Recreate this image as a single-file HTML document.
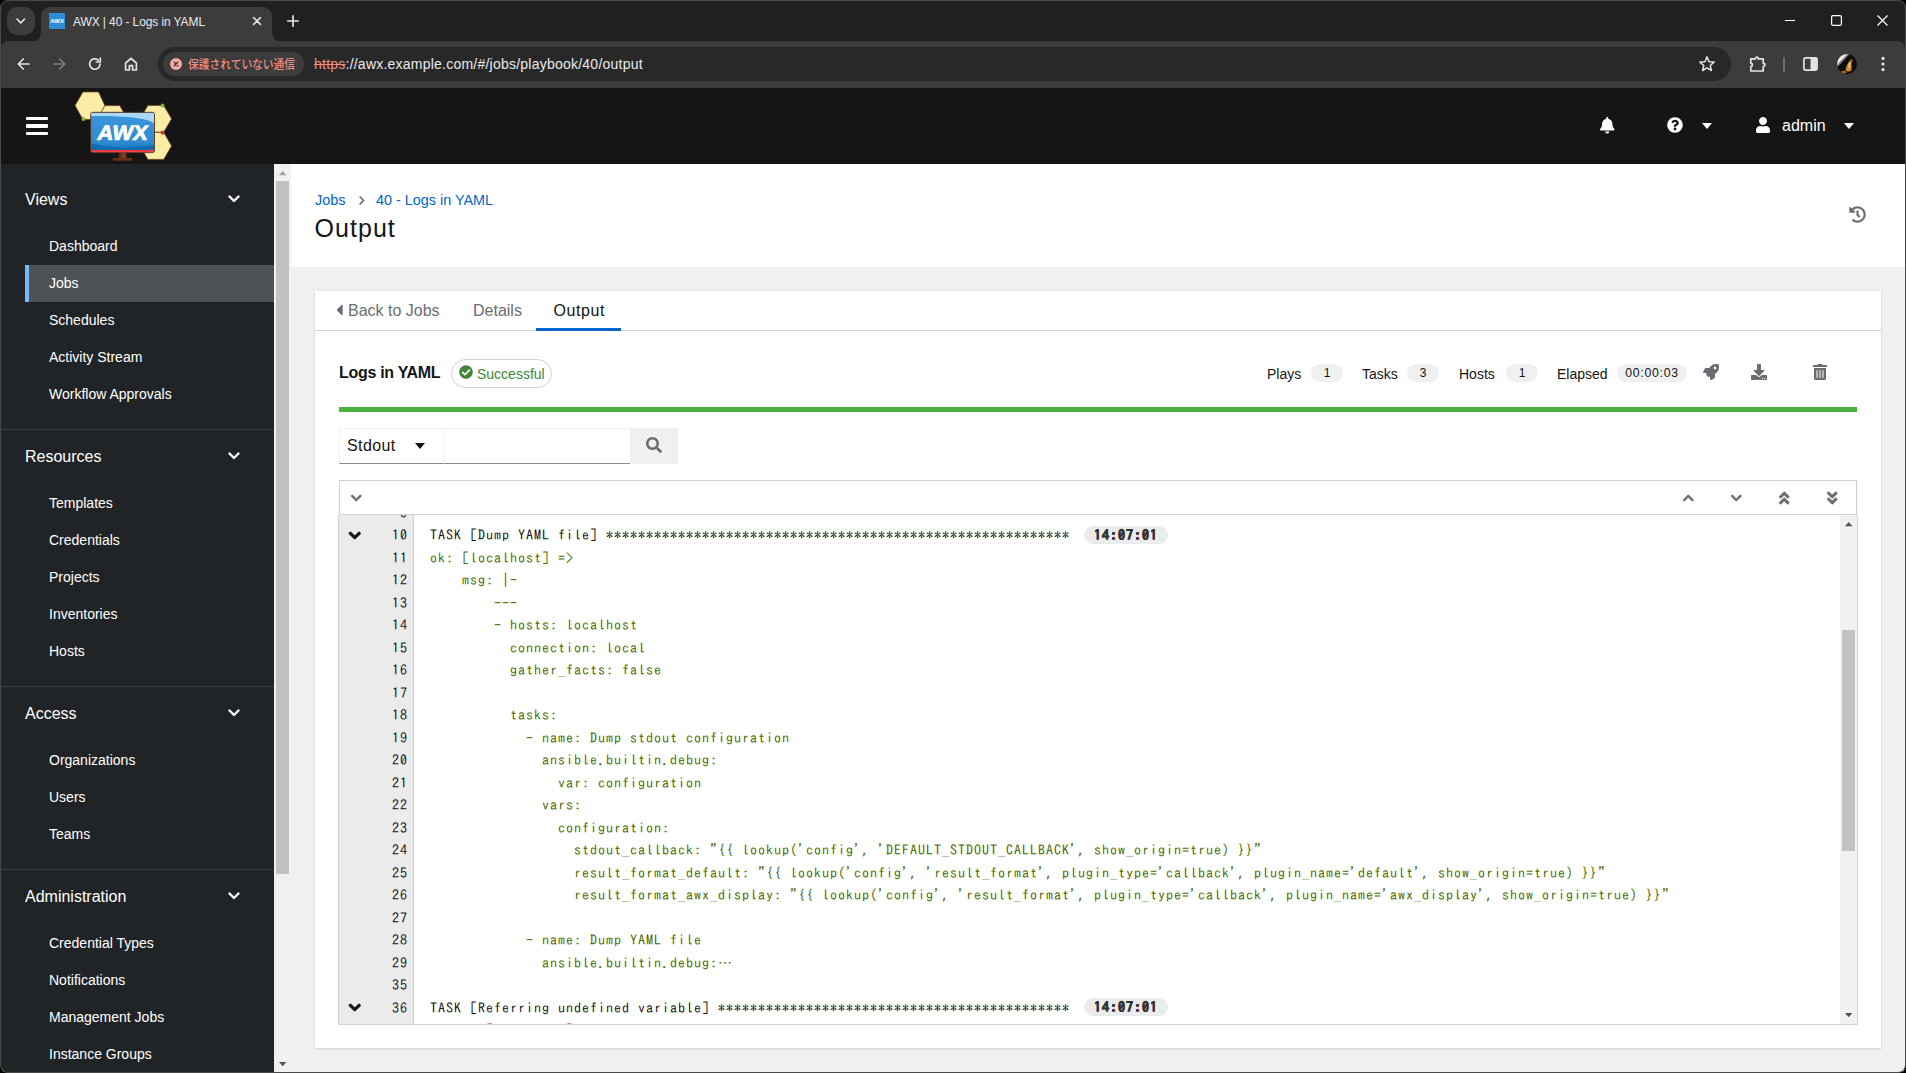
<!DOCTYPE html>
<html lang="ja">
<head>
<meta charset="utf-8">
<title>AWX | 40 - Logs in YAML</title>
<style>
*{box-sizing:border-box;margin:0;padding:0}
html,body{width:1906px;height:1073px;overflow:hidden;background:#000}
body{font-family:"Liberation Sans","Noto Sans CJK JP",sans-serif;color:#151515;position:relative}
.abs{position:absolute}
svg{display:block;position:absolute;overflow:visible}
/* ---------- window ---------- */
#win{position:absolute;left:0;top:0;width:1906px;height:1073px;background:#1f2020;border-radius:8px;overflow:hidden}
#winborder{position:absolute;left:0;top:0;width:1906px;height:1073px;border:1px solid #4a4947;border-radius:8px;z-index:50;pointer-events:none}
/* ---------- tab strip ---------- */
#tabsearch{left:7px;top:7px;width:27.7px;height:27.7px;border-radius:10px;background:#3c3c3c}
#tab{left:41px;top:7px;width:231px;height:35px;background:#3c3c3c;border-radius:9px 9px 0 0}
#tab:before,#tab:after{content:"";position:absolute;bottom:0;width:9px;height:9px}
#tab:before{left:-9px;background:radial-gradient(circle at 0 0,rgba(60,60,60,0) 8.5px,#3c3c3c 9px)}
#tab:after{right:-9px;background:radial-gradient(circle at 100% 0,rgba(60,60,60,0) 8.5px,#3c3c3c 9px)}
#favicon{left:49px;top:13px;width:16px;height:16px;background:#2e8dd6}
#tabtitle{left:73px;top:13px;height:18px;line-height:18px;font-size:12px;color:#e8eaed;white-space:nowrap;letter-spacing:-0.1px}
/* ---------- toolbar ---------- */
#toolbar{left:1px;top:41px;width:1904px;height:47px;background:#3c3c3c;border-radius:8px 8px 0 0}
#omni{left:158px;top:47px;width:1573px;height:34px;border-radius:17px;background:#282828}
#chip{left:163px;top:52px;width:141px;height:24px;border-radius:12px;background:#3c3c3c}
#chiptxt{left:188px;top:53.5px;height:24px;line-height:23px;font-size:12px;font-weight:500;color:#f28b82;white-space:nowrap;font-family:"Liberation Sans","Noto Sans CJK JP",sans-serif;transform:scaleX(0.895);transform-origin:0 50%}
#url{left:314px;top:52px;height:24px;line-height:24px;font-size:14px;color:#e8eaed;white-space:nowrap;letter-spacing:0.23px}
#url s{color:#f28b82;text-decoration-thickness:1px}
/* ---------- AWX header ---------- */
#page{left:1px;top:88px;width:1904px;height:984px;background:#f0f0f0;overflow:hidden}
#hdr{left:0;top:0;width:1904px;height:76px;background:#151515}
#admin{left:1781px;top:26px;height:24px;line-height:24px;font-size:16px;color:#fff;white-space:nowrap}
/* ---------- sidebar ---------- */
#side{left:0;top:76px;width:273px;height:908px;background:#212427;color:#fff}
.sec{position:absolute;left:24px;height:24px;line-height:24px;font-size:16px;white-space:nowrap}
.it{position:absolute;left:48px;height:37px;line-height:37px;font-size:14px;white-space:nowrap}
.sep{position:absolute;left:0;width:273px;height:1px;background:#3c3f42}
.chev{left:227px;width:12px;height:8px}
#cur{left:24px;top:101px;width:249px;height:37px;background:#4f5255;border-left:4px solid #73bcf7}
#sbar{left:273px;top:76px;width:17px;height:908px;background:#f1f1f1}
#sthumb{left:275px;top:93px;width:13px;height:693px;background:#c1c1c1}

/* ---------- main ---------- */
#phead{left:290px;top:76px;width:1614px;height:103px;background:#fff}
.bc{position:absolute;top:101px;height:22px;line-height:22px;font-size:14.4px;color:#0066cc;white-space:nowrap}
#title{left:313.5px;top:123.5px;height:32px;line-height:32px;font-size:25px;color:#151515;white-space:nowrap;letter-spacing:1.05px}
#card{left:314px;top:203px;width:1566px;height:757px;background:#fff;box-shadow:0 1px 2px rgba(3,3,3,.12),0 0 2px rgba(3,3,3,.06)}
#tabline{left:314px;top:242px;width:1566px;height:1px;background:#d2d2d2}
.tab{position:absolute;top:211px;height:24px;line-height:24px;font-size:16px;color:#6a6e73;white-space:nowrap}
#tabul{left:535px;top:240px;width:85px;height:3px;background:#0066cc}
#jname{left:338px;top:273px;height:24px;line-height:24px;font-size:16px;font-weight:bold;color:#151515;white-space:nowrap;letter-spacing:-0.3px}
#pill{left:450px;top:271px;width:101px;height:29px;border:1px solid #d2d2d2;border-radius:15px;background:#fff}
#pilltxt{left:476px;top:274.6px;height:22px;line-height:22px;font-size:14px;color:#3e8635;white-space:nowrap}
.st{position:absolute;margin-left:-1px;top:275px;height:22px;line-height:22px;font-size:14px;color:#151515;white-space:nowrap}
.bd{position:absolute;top:275.5px;height:18px;line-height:18px;border-radius:9px;background:#f0f0f0;font-size:12px;color:#151515;text-align:center;white-space:nowrap}
#gbar{left:338px;top:319px;width:1518px;height:5px;background:#4cb140}
#sel{left:338px;top:340px;width:105px;height:36px;background:#fff;border:1px solid #f0f0f0;border-bottom:1px solid #8a8d90}
#seltxt{left:346px;top:346px;height:24px;line-height:24px;font-size:16px;color:#151515;white-space:nowrap;letter-spacing:0.4px}
#inp{left:442px;top:340px;width:188px;height:36px;background:#fff;border:1px solid #f0f0f0;border-bottom:1px solid #8a8d90}
#sbtn{left:629px;top:340px;width:48px;height:36px;background:#f0f0f0}
#otb{left:338px;top:392px;width:1518px;height:35px;background:#fff;border:1px solid #d2d2d2}
#out{left:337px;top:427px;width:1520px;height:510px;background:#fff;border:1px solid #d2d2d2;border-top:none;overflow:hidden}
#gut{left:0;top:0;width:74.5px;height:511px;background:#ebebeb;border-right:1px solid #d2d2d2}
#oscr{left:1501px;top:0;width:17px;height:511px;background:#f1f1f1}
#othumb{left:1503px;top:115px;width:13px;height:221px;background:#c1c1c1}
.ln,.cd{position:absolute;height:22.5px;line-height:22.5px;font-family:"IPAGothic","Liberation Mono",monospace;font-size:14px;letter-spacing:1px;white-space:pre;margin-top:1px}
.ln{left:0;width:69px;text-align:right;color:#151515}
.cd{left:91px;color:#151515}
.g{color:#486b00}
.r{color:#c9190b}
.ts{position:absolute;left:745px;width:84px;height:18px;border-radius:9px;background:#ebebeb;font-family:"IPAGothic","Liberation Mono",monospace;font-size:14px;letter-spacing:1px;font-weight:bold;line-height:18px;text-align:center;color:#333;-webkit-text-stroke:0.5px #333}
</style>
</head>
<body>
<div id="win">

<!-- ======== tab strip ======== -->
<div id="tabsearch" class="abs"></div>
<svg style="left:16.2px;top:17.8px" width="9.5" height="6.3" viewBox="0 0 9.5 6.3"><path d="M1 1 L4.75 4.9 L8.5 1" fill="none" stroke="#f0f0f0" stroke-width="1.5" stroke-linecap="round" stroke-linejoin="round"/></svg>
<div id="tab" class="abs"></div>
<div id="favicon" class="abs"><svg style="left:0;top:0" width="16" height="16" viewBox="0 0 16 16"><text x="8.1" y="10" text-anchor="middle" font-family="Liberation Sans, sans-serif" font-weight="bold" font-size="5.6" fill="#fff" textLength="13.6" lengthAdjust="spacingAndGlyphs">AWX</text></svg></div>
<div id="tabtitle" class="abs">AWX | 40 - Logs in YAML</div>
<svg style="left:252px;top:16px" width="10" height="10" viewBox="0 0 10 10"><path d="M1.6 1.6 L8.4 8.4 M8.4 1.6 L1.6 8.4" stroke="#e3e3e3" stroke-width="1.5" stroke-linecap="round"/></svg>
<svg style="left:287px;top:15px" width="12" height="12" viewBox="0 0 12 12"><path d="M6 0.8 V11.2 M0.8 6 H11.2" stroke="#e3e3e3" stroke-width="1.7" stroke-linecap="round"/></svg>
<!-- window controls -->
<div class="abs" style="left:1785px;top:20px;width:10px;height:1px;background:#fff"></div>
<svg style="left:1831px;top:15px" width="11" height="11" viewBox="0 0 11 11"><rect x="0.6" y="0.6" width="9.8" height="9.8" rx="1.5" fill="none" stroke="#fff" stroke-width="1.2"/></svg>
<svg style="left:1877px;top:15px" width="11" height="11" viewBox="0 0 11 11"><path d="M0.5 0.5 L10.5 10.5 M10.5 0.5 L0.5 10.5" stroke="#fff" stroke-width="1.2"/></svg>

<!-- ======== toolbar ======== -->
<div id="toolbar" class="abs"></div>
<svg style="left:17px;top:58px" width="13" height="12" viewBox="0 0 13 12"><path d="M12 6 H1.5 M6.3 1 L1.3 6 L6.3 11" fill="none" stroke="#e3e3e3" stroke-width="1.7" stroke-linecap="round" stroke-linejoin="round"/></svg>
<svg style="left:53px;top:58px" width="13" height="12" viewBox="0 0 13 12"><path d="M1 6 H11.5 M6.7 1 L11.7 6 L6.7 11" fill="none" stroke="#7d7d7d" stroke-width="1.7" stroke-linecap="round" stroke-linejoin="round"/></svg>
<svg style="left:88px;top:57px" width="14" height="14" viewBox="0 0 14 14"><path d="M12 7 A5.2 5.2 0 1 1 10.2 3.1" fill="none" stroke="#e3e3e3" stroke-width="1.7" stroke-linecap="round"/><path d="M12.3 1 V5 H8.3" fill="none" stroke="#e3e3e3" stroke-width="1.7" stroke-linejoin="round" stroke-linecap="round"/></svg>
<svg style="left:124px;top:57px" width="14" height="14" viewBox="0 0 14 14"><path d="M1.6 6 L7 1.5 L12.4 6 V13 H8.6 V8.6 H5.4 V13 H1.6 Z" fill="none" stroke="#e3e3e3" stroke-width="1.7" stroke-linejoin="round"/></svg>
<div id="omni" class="abs"></div>
<div id="chip" class="abs"></div>
<svg style="left:170px;top:58px" width="12" height="12" viewBox="0 0 12 12"><circle cx="6" cy="6" r="6" fill="#f4aaa4"/><path d="M4.2 4.2 L7.8 7.8 M7.8 4.2 L4.2 7.8" stroke="#2a2020" stroke-width="1.2" stroke-linecap="round"/></svg>
<div id="chiptxt" class="abs">保護されていない通信</div>
<div id="url" class="abs"><s>https</s>://awx.example.com/#/jobs/playbook/40/output</div>
<svg style="left:1699px;top:56px" width="16" height="16" viewBox="0 0 16 16"><path d="M8 0.9 L10 5.7 L15.1 6.1 L11.2 9.5 L12.4 14.5 L8 11.8 L3.6 14.5 L4.8 9.5 L0.9 6.1 L6 5.7 Z" fill="none" stroke="#e3e3e3" stroke-width="1.5" stroke-linejoin="round"/></svg>
<svg style="left:1749px;top:55px" width="18" height="17" viewBox="0 0 18 17"><path d="M1.8 3.9 H6.2 A1.55 1.7 0 0 1 9.3 3.9 H14.2 V8.4 A1.7 1.55 0 0 1 14.2 11.5 V16 H1.8 V11.5 A1.6 1.55 0 0 0 1.8 8.4 Z" fill="none" stroke="#e3e3e3" stroke-width="1.7" stroke-linejoin="round"/></svg>
<div class="abs" style="left:1783px;top:56.5px;width:2px;height:15.5px;border-radius:1px;background:#6e6e6e"></div>
<svg style="left:1803px;top:57px" width="15" height="14" viewBox="0 0 15 14"><rect x="0.9" y="0.9" width="13.2" height="12.2" rx="1.6" fill="none" stroke="#e3e3e3" stroke-width="1.7"/><rect x="7.5" y="1" width="6.5" height="12" fill="#e3e3e3"/></svg>
<svg style="left:1837px;top:54px" width="20" height="20" viewBox="0 0 20 20"><defs><clipPath id="avc"><circle cx="10" cy="10" r="10"/></clipPath></defs><g clip-path="url(#avc)"><rect width="20" height="20" fill="#100c0a"/><path d="M-2 14 L13 -2 L-2 -2 Z" fill="#f4f2ee"/><path d="M-2 15.5 L14.5 -2 L12 -2 L-2 13 Z" fill="#8a8580"/><path d="M8.5 16.5 C9 12 11 8.5 14 5.5 C15 8 14.5 12 14.5 16 C13 18 10 18 8.5 16.5 Z" fill="#c98a3a"/><path d="M11 13 C11.5 10.5 12.5 9 13.6 7.6 C13.8 10 13.2 12 12.8 14.5 Z" fill="#f0c27a"/><path d="M13.5 5 C15 4.6 16.6 5.6 16.4 7.6 C15.6 8.6 14.4 8 13.9 7 Z" fill="#7a3a1c"/><path d="M4 17.5 C6 16.2 9 16.4 10 18.5 L4 20 Z" fill="#b5651d"/></g></svg>
<svg style="left:1881px;top:56px" width="4" height="16" viewBox="0 0 4 16"><circle cx="2" cy="2.4" r="1.6" fill="#e3e3e3"/><circle cx="2" cy="8" r="1.6" fill="#e3e3e3"/><circle cx="2" cy="13.6" r="1.6" fill="#e3e3e3"/></svg>

<!-- ======== page ======== -->
<div id="page" class="abs">
<div id="hdr" class="abs"></div>

<!-- hamburger -->
<div class="abs" style="left:25px;top:28.5px;width:22px;height:3.6px;border-radius:1px;background:#fff"></div>
<div class="abs" style="left:25px;top:36.1px;width:22px;height:3.6px;border-radius:1px;background:#fff"></div>
<div class="abs" style="left:25px;top:43.7px;width:22px;height:3.6px;border-radius:1px;background:#fff"></div>
<!-- AWX logo -->
<svg style="left:71px;top:2px" width="102" height="72" viewBox="72 90 102 72">
<defs><linearGradient id="scr" x1="0" y1="0" x2="0" y2="1"><stop offset="0" stop-color="#3a97dc"/><stop offset="0.75" stop-color="#2e8bd2"/><stop offset="1" stop-color="#0d6cb2"/></linearGradient></defs>
<g fill="#fbeca6" stroke="#6b3a1a" stroke-width="0.8" stroke-linejoin="round">
<path d="M75 105.6 L82.9 91.9 H98.6 L104.9 105.6 L98.6 119.5 H82.9 Z"/>
<path d="M97 119.3 L104.9 105.6 H119.7 L127.6 119.3 L119.7 133 H104.9 Z"/>
<path d="M140 118.8 L147.9 105.4 H163.7 L171.6 118.8 L163.7 132.3 H147.9 Z"/>
<path d="M140 145.9 L147.9 132.3 H163.7 L171.6 145.9 L163.7 159.4 H147.9 Z"/>
</g>
<circle cx="83.4" cy="119.2" r="1.7" fill="#8cc63f" stroke="#5a7a1a" stroke-width="0.5"/>
<circle cx="162.6" cy="105.4" r="1.7" fill="#8cc63f" stroke="#5a7a1a" stroke-width="0.5"/>
<circle cx="162.6" cy="132.7" r="1.7" fill="#ee3b3b" stroke="#8a1c1c" stroke-width="0.5"/>
<rect x="119" y="152" width="7.5" height="6.5" fill="#6b2f14"/>
<rect x="122.7" y="152" width="2" height="6.5" fill="#8a4a2a"/>
<rect x="112.8" y="158" width="19.6" height="2.8" rx="1.4" fill="#6b2f14"/>
<rect x="90.7" y="112.3" width="63.8" height="40.3" rx="2" fill="url(#scr)" stroke="#6b2f14" stroke-width="0.9"/>
<path d="M91.3 113 H154 V123.5 C148 117.5 120 115.5 91.3 116 Z" fill="#a9d9f6"/>
<path d="M91.3 143 C110 149 140 148 154 145 V150 H91.3 Z" fill="#0a69b0" opacity="0.85"/>
<rect x="91.2" y="150" width="62.8" height="2.2" fill="#ee3d43"/>
<text transform="translate(121.6 139.6) skewX(-10)" x="0" y="0" text-anchor="middle" font-family="Liberation Sans, sans-serif" font-weight="bold" font-size="21" fill="#fff" stroke="#fff" stroke-width="0.75" stroke-linejoin="round" textLength="50" lengthAdjust="spacingAndGlyphs">AWX</text>
</svg>
<!-- bell -->
<svg style="left:1598.5px;top:29px" width="14.5" height="16.5" viewBox="0 0 448 512"><path fill="#fff" d="M224 512c35.32 0 63.97-28.65 63.97-64H160.03c0 35.35 28.65 64 63.97 64zm215.39-149.71c-19.32-20.76-55.47-51.99-55.47-154.29 0-77.7-54.48-139.9-127.94-155.16V32c0-17.67-14.32-32-31.98-32s-31.98 14.33-31.98 32v20.84C118.56 68.1 64.08 130.3 64.08 208c0 102.3-36.15 133.53-55.47 154.29-6 6.45-8.66 14.16-8.61 21.71.11 16.4 12.98 32 32.1 32h383.8c19.12 0 32-15.6 32.1-32 .05-7.55-2.61-15.27-8.61-21.71z"/></svg>
<!-- help -->
<svg style="left:1666px;top:29px" width="16" height="16" viewBox="0 0 512 512"><path fill="#fff" d="M504 256c0 136.997-111.043 248-248 248S8 392.997 8 256C8 119.083 119.043 8 256 8s248 111.083 248 248zM262.655 90c-54.497 0-89.255 22.957-116.549 63.758-3.536 5.286-2.353 12.415 2.715 16.258l34.699 26.31c5.205 3.947 12.621 3.008 16.665-2.122 17.864-22.658 30.113-35.797 57.303-35.797 20.429 0 45.698 13.148 45.698 32.958 0 14.976-12.363 22.667-32.534 33.976C247.128 238.528 216 254.941 216 296v4c0 6.627 5.373 12 12 12h56c6.627 0 12-5.373 12-12v-1.333c0-28.462 83.186-29.647 83.186-106.667 0-58.002-60.165-102-116.531-102zM256 338c-25.365 0-46 20.635-46 46 0 25.364 20.635 46 46 46s46-20.636 46-46c0-25.365-20.635-46-46-46z"/></svg>
<svg style="left:1701px;top:34.5px" width="10" height="6" viewBox="0 0 10 6"><path d="M0 0 H10 L5 6 Z" fill="#fff"/></svg>
<!-- user -->
<svg style="left:1755px;top:29px" width="14" height="16" viewBox="0 0 448 512"><path fill="#fff" d="M224 256c70.7 0 128-57.3 128-128S294.700 0 224 0 96 57.300 96 128s57.300 128 128 128zm89.600 32h-16.700c-22.200 10.200-46.900 16-72.900 16s-50.600-5.800-72.900-16h-16.700C60.200 288 0 348.200 0 422.400V464c0 26.500 21.500 48 48 48h352c26.500 0 48-21.500 48-48v-41.600c0-74.200-60.200-134.400-134.400-134.400z"/></svg>
<div id="admin" class="abs">admin</div>
<svg style="left:1843px;top:34.5px" width="10" height="6" viewBox="0 0 10 6"><path d="M0 0 H10 L5 6 Z" fill="#fff"/></svg>

<div id="side" class="abs">
<div id="cur" class="abs"></div>
<div class="sec" style="top:24px">Views</div>
<svg class="chev" style="top:30.5px" width="12" height="8" viewBox="0 0 12 8"><path d="M1.5 1.5 L6 6 L10.5 1.5" fill="none" stroke="#fff" stroke-width="2.4" stroke-linecap="round" stroke-linejoin="round"/></svg>
<div class="it" style="top:64px">Dashboard</div>
<div class="it" style="top:101px">Jobs</div>
<div class="it" style="top:138px">Schedules</div>
<div class="it" style="top:175px">Activity Stream</div>
<div class="it" style="top:212px">Workflow Approvals</div>
<div class="sep" style="top:265px"></div>
<div class="sec" style="top:281px">Resources</div>
<svg class="chev" style="top:287.5px" width="12" height="8" viewBox="0 0 12 8"><path d="M1.5 1.5 L6 6 L10.5 1.5" fill="none" stroke="#fff" stroke-width="2.4" stroke-linecap="round" stroke-linejoin="round"/></svg>
<div class="it" style="top:321px">Templates</div>
<div class="it" style="top:358px">Credentials</div>
<div class="it" style="top:395px">Projects</div>
<div class="it" style="top:432px">Inventories</div>
<div class="it" style="top:469px">Hosts</div>
<div class="sep" style="top:522px"></div>
<div class="sec" style="top:538px">Access</div>
<svg class="chev" style="top:544.5px" width="12" height="8" viewBox="0 0 12 8"><path d="M1.5 1.5 L6 6 L10.5 1.5" fill="none" stroke="#fff" stroke-width="2.4" stroke-linecap="round" stroke-linejoin="round"/></svg>
<div class="it" style="top:578px">Organizations</div>
<div class="it" style="top:615px">Users</div>
<div class="it" style="top:652px">Teams</div>
<div class="sep" style="top:705px"></div>
<div class="sec" style="top:721px">Administration</div>
<svg class="chev" style="top:727.5px" width="12" height="8" viewBox="0 0 12 8"><path d="M1.5 1.5 L6 6 L10.5 1.5" fill="none" stroke="#fff" stroke-width="2.4" stroke-linecap="round" stroke-linejoin="round"/></svg>
<div class="it" style="top:761px">Credential Types</div>
<div class="it" style="top:798px">Notifications</div>
<div class="it" style="top:835px">Management Jobs</div>
<div class="it" style="top:872px">Instance Groups</div>
</div>
<div id="sbar" class="abs"></div><div id="sthumb" class="abs"></div>
<svg style="left:277.8px;top:82.5px" width="7.4" height="4.2" viewBox="0 0 9 5"><path d="M0 5 H9 L4.5 0 Z" fill="#a3a3a3"/></svg>
<svg style="left:277.8px;top:973.5px" width="7.4" height="4.2" viewBox="0 0 9 5"><path d="M0 0 H9 L4.5 5 Z" fill="#505050"/></svg>
<div id="phead" class="abs"></div>
<div class="bc" style="left:314px">Jobs</div>
<svg style="left:358px;top:107.5px" width="6" height="9" viewBox="0 0 6 9"><path d="M1.2 1.2 L4.6 4.5 L1.2 7.8" fill="none" stroke="#6a6e73" stroke-width="1.7" stroke-linecap="round" stroke-linejoin="round"/></svg>
<div class="bc" style="left:375px">40 - Logs in YAML</div>
<div id="title" class="abs">Output</div>
<svg style="left:1848px;top:118px" width="17" height="17" viewBox="0 0 512 512"><path fill="#6a6e73" d="M504 255.531c.253 136.640-111.180 248.372-247.820 248.468-59.015.042-113.223-20.530-155.822-54.911-11.077-8.940-11.905-25.541-1.839-35.607l11.267-11.267c8.609-8.609 22.353-9.551 31.891-1.984C173.062 425.135 212.781 440 256 440c101.705 0 184-82.311 184-184 0-101.705-82.311-184-184-184-48.814 0-93.149 18.969-126.068 49.932l50.754 50.754c10.080 10.080 2.941 27.314-11.313 27.314H24c-8.837 0-16-7.163-16-16V38.627c0-14.254 17.234-21.393 27.314-11.314l49.372 49.372C129.209 34.136 189.552 8 256 8c136.810 0 247.747 110.780 248 247.531zm-180.912 78.784l9.823-12.630c8.138-10.463 6.253-25.542-4.210-33.679L288 256.349V152c0-13.255-10.745-24-24-24h-16c-13.255 0-24 10.745-24 24v135.651l65.409 50.874c10.463 8.137 25.541 6.253 33.679-4.210z"/></svg>
<div id="card" class="abs"></div><div id="tabline" class="abs"></div>
<svg style="left:334.6px;top:213px" width="6.7" height="17.9" viewBox="0 0 192 512"><path fill="#6a6e73" d="M192 127.338v257.324c0 17.818-21.543 26.741-34.142 14.142L29.196 270.142c-7.810-7.810-7.810-20.474 0-28.284l128.662-128.662c12.599-12.600 34.142-3.676 34.142 14.142z"/></svg>
<div class="tab" style="left:347px">Back to Jobs</div>
<div class="tab" style="left:472px">Details</div>
<div class="tab" style="left:552.5px;color:#151515;letter-spacing:0.6px">Output</div>
<div id="tabul" class="abs"></div>
<div id="jname" class="abs">Logs in YAML</div>
<div id="pill" class="abs"></div>
<svg style="left:458px;top:276.8px" width="14" height="14" viewBox="0 0 512 512"><path fill="#3e8635" d="M504 256c0 136.967-111.033 248-248 248S8 392.967 8 256 119.033 8 256 8s248 111.033 248 248zM227.314 387.314l184-184c6.248-6.248 6.248-16.379 0-22.627l-22.627-22.627c-6.248-6.249-16.379-6.249-22.628 0L216 308.118l-70.059-70.059c-6.248-6.248-16.379-6.248-22.628 0l-22.627 22.627c-6.248 6.248-6.248 16.379 0 22.627l104 104c6.249 6.249 16.379 6.249 22.628.001z"/></svg>
<div id="pilltxt" class="abs">Successful</div>
<div class="st" style="left:1267px">Plays</div><div class="bd" style="left:1310px;width:32px">1</div>
<div class="st" style="left:1362px">Tasks</div><div class="bd" style="left:1406px;width:32px">3</div>
<div class="st" style="left:1459px">Hosts</div><div class="bd" style="left:1505px;width:32px">1</div>
<div class="st" style="left:1557px">Elapsed</div><div class="bd" style="left:1616px;width:70px;letter-spacing:0.7px;font-size:12.3px;line-height:18.8px">00:00:03</div>
<svg style="left:1701.5px;top:275.5px" width="16" height="16" viewBox="0 0 512 512"><path fill="#6a6e73" d="M505.120 19.094c-1.189-5.531-6.658-11-12.207-12.188C460.716 0 435.507 0 410.407 0 307.175 0 245.269 55.203 199.052 128H94.838c-16.348.016-35.557 11.875-42.887 26.484L2.516 253.297c-1.626 3.359-2.516 7.047-2.516 10.781 0 13.250 10.750 24 24 24h103.844l-22.474 22.469c-11.365 11.361-12.996 32.257 0 45.250l50.904 50.906c12.783 12.805 33.787 11.452 45.256 0l22.471-22.468V488c0 13.250 10.750 24 24 24 3.738 0 7.416-.891 10.785-2.516l98.728-49.390c14.629-7.297 26.498-26.500 26.498-42.859V312.797c72.592-46.300 128.012-108.400 128.012-211.094.100-25.203.100-50.406-6.904-82.609zM384.040 168c-22.092 0-40-17.906-40-40s17.908-40 40-40c22.094 0 40 17.906 40 40s-17.906 40-40 40z"/></svg>
<svg style="left:1750px;top:275.5px" width="16" height="16" viewBox="0 0 512 512"><path fill="#6a6e73" d="M216 0h80c13.300 0 24 10.700 24 24v168h87.700c17.800 0 26.700 21.500 14.100 34.100L269.700 378.300c-7.500 7.500-19.800 7.500-27.300 0L90.100 226.100c-12.600-12.600-3.700-34.100 14.100-34.100H192V24c0-13.300 10.700-24 24-24zm296 376v112c0 13.300-10.700 24-24 24H24c-13.300 0-24-10.700-24-24V376c0-13.300 10.700-24 24-24h146.700l49 49c20.100 20.100 52.500 20.100 72.600 0l49-49H488c13.300 0 24 10.700 24 24zm-124 88c0-11-9-20-20-20s-20 9-20 20 9 20 20 20 20-9 20-20zm64 0c0-11-9-20-20-20s-20 9-20 20 9 20 20 20 20-9 20-20z"/></svg>
<svg style="left:1812px;top:275.5px" width="14" height="16" viewBox="0 0 448 512"><path fill="#6a6e73" d="M32 464a48 48 0 0 0 48 48h288a48 48 0 0 0 48-48V128H32zm272-256a16 16 0 0 1 32 0v224a16 16 0 0 1-32 0zm-96 0a16 16 0 0 1 32 0v224a16 16 0 0 1-32 0zm-96 0a16 16 0 0 1 32 0v224a16 16 0 0 1-32 0zM432 32H312l-9.400-18.700A24 24 0 0 0 281.100 0H166.800a23.720 23.720 0 0 0-21.400 13.300L136 32H16A16 16 0 0 0 0 48v32a16 16 0 0 0 16 16h416a16 16 0 0 0 16-16V48a16 16 0 0 0-16-16z"/></svg>
<div id="gbar" class="abs"></div>
<div id="sel" class="abs"></div><div id="seltxt" class="abs">Stdout</div>
<svg style="left:414px;top:355px" width="10" height="6" viewBox="0 0 10 6"><path d="M0 0 H10 L5 6 Z" fill="#151515"/></svg>
<div id="inp" class="abs"></div><div id="sbtn" class="abs"></div>
<svg style="left:645px;top:349px" width="16" height="16" viewBox="0 0 512 512"><path fill="#6a6e73" d="M505 442.700L405.300 343c-4.500-4.500-10.600-7-17-7H372c27.600-35.300 44-79.700 44-128C416 93.100 322.900 0 208 0S0 93.100 0 208s93.100 208 208 208c48.300 0 92.700-16.400 128-44v16.300c0 6.400 2.500 12.500 7 17l99.700 99.700c9.400 9.400 24.600 9.400 33.900 0l28.300-28.300c9.400-9.400 9.400-24.600.1-34zM208 336c-70.700 0-128-57.200-128-128 0-70.700 57.200-128 128-128 70.700 0 128 57.200 128 128 0 70.700-57.200 128-128 128z"/></svg>
<div id="otb" class="abs"></div>
<svg style="left:350px;top:403.5px" width="10.5" height="12" viewBox="0 0 448 512"><path fill="#6a6e73" stroke="#6a6e73" stroke-width="30" d="M207.029 381.476L12.686 187.132c-9.373-9.373-9.373-24.569 0-33.941l22.667-22.667c9.357-9.357 24.522-9.375 33.901-.04L224 284.505l154.745-154.021c9.379-9.335 24.544-9.317 33.901.04l22.667 22.667c9.373 9.373 9.373 24.569 0 33.941L240.971 381.476c-9.373 9.372-24.569 9.372-33.942 0z"/></svg>
<svg style="left:1681.5px;top:403.5px" width="10.5" height="12" viewBox="0 0 448 512"><path fill="#6a6e73" stroke="#6a6e73" stroke-width="30" d="M240.971 130.524l194.343 194.343c9.373 9.373 9.373 24.569 0 33.941l-22.667 22.667c-9.357 9.357-24.522 9.375-33.901.04L224 227.495 69.255 381.516c-9.379 9.335-24.544 9.317-33.901-.04l-22.667-22.667c-9.373-9.373-9.373-24.569 0-33.941L207.03 130.525c9.372-9.373 24.568-9.373 33.941-.001z"/></svg>
<svg style="left:1729.5px;top:403.5px" width="10.5" height="12" viewBox="0 0 448 512"><path fill="#6a6e73" stroke="#6a6e73" stroke-width="30" d="M207.029 381.476L12.686 187.132c-9.373-9.373-9.373-24.569 0-33.941l22.667-22.667c9.357-9.357 24.522-9.375 33.901-.04L224 284.505l154.745-154.021c9.379-9.335 24.544-9.317 33.901.04l22.667 22.667c9.373 9.373 9.373 24.569 0 33.941L240.971 381.476c-9.373 9.372-24.569 9.372-33.942 0z"/></svg>
<svg style="left:1778px;top:402px" width="10.5" height="16" viewBox="0 0 320 512"><path fill="#6a6e73" stroke="#6a6e73" stroke-width="22" d="M177 255.700l136 136c9.400 9.400 9.400 24.600 0 33.900l-22.600 22.600c-9.400 9.400-24.600 9.400-33.900 0L160 351.900l-96.400 96.400c-9.400 9.400-24.600 9.400-33.900 0L7 425.700c-9.400-9.400-9.400-24.600 0-33.900l136-136c9.400-9.500 24.600-9.500 34-.1zm-34-192L7 199.700c-9.400 9.400-9.400 24.600 0 33.900l22.600 22.600c9.400 9.400 24.600 9.400 33.900 0l96.400-96.400 96.400 96.400c9.400 9.400 24.600 9.400 33.900 0l22.600-22.600c9.400-9.400 9.400-24.600 0-33.900l-136-136c-9.200-9.400-24.400-9.400-33.800 0z"/></svg>
<svg style="left:1826px;top:402px" width="10.5" height="16" viewBox="0 0 320 512"><path fill="#6a6e73" stroke="#6a6e73" stroke-width="22" d="M143 256.300L7 120.300c-9.400-9.400-9.400-24.600 0-33.900l22.600-22.600c9.400-9.400 24.600-9.400 33.900 0l96.400 96.400 96.400-96.400c9.400-9.400 24.600-9.400 33.900 0L313 86.300c9.400 9.400 9.400 24.600 0 33.900l-136 136c-9.400 9.500-24.600 9.500-34 .1zm34 192l136-136c9.400-9.400 9.400-24.600 0-33.900l-22.600-22.600c-9.400-9.400-24.600-9.400-33.900 0L160 352.100l-96.400-96.400c-9.400-9.400-24.600-9.400-33.900 0L7 278.300c-9.400 9.400-9.400 24.600 0 33.900l136 136c9.400 9.500 24.600 9.500 34 .1z"/></svg>
<div id="out" class="abs"><div id="gut" class="abs"></div>
<div class="ln" style="top:-14.15px">9</div>
<div class="ln" style="top:8.35px">10</div>
<div class="cd" style="top:8.35px">TASK [Dump YAML file] **********************************************************</div>
<div class="ts" style="top:10.75px">14:07:01</div>
<svg style="left:10px;top:13.85px" width="11.5" height="13" viewBox="0 0 448 512"><path fill="#151515" stroke="#151515" stroke-width="42" d="M207.029 381.476L12.686 187.132c-9.373-9.373-9.373-24.569 0-33.941l22.667-22.667c9.357-9.357 24.522-9.375 33.901-.04L224 284.505l154.745-154.021c9.379-9.335 24.544-9.317 33.901.04l22.667 22.667c9.373 9.373 9.373 24.569 0 33.941L240.971 381.476c-9.373 9.372-24.569 9.372-33.942 0z"/></svg>
<div class="ln" style="top:30.85px">11</div>
<div class="cd g" style="top:30.85px">ok: [localhost] =&gt;</div>
<div class="ln" style="top:53.35px">12</div>
<div class="cd g" style="top:53.35px">    msg: |-</div>
<div class="ln" style="top:75.85px">13</div>
<div class="cd g" style="top:75.85px">        ---</div>
<div class="ln" style="top:98.35px">14</div>
<div class="cd g" style="top:98.35px">        - hosts: localhost</div>
<div class="ln" style="top:120.85px">15</div>
<div class="cd g" style="top:120.85px">          connection: local</div>
<div class="ln" style="top:143.35px">16</div>
<div class="cd g" style="top:143.35px">          gather_facts: false</div>
<div class="ln" style="top:165.85px">17</div>
<div class="ln" style="top:188.35px">18</div>
<div class="cd g" style="top:188.35px">          tasks:</div>
<div class="ln" style="top:210.85px">19</div>
<div class="cd g" style="top:210.85px">            - name: Dump stdout configuration</div>
<div class="ln" style="top:233.35px">20</div>
<div class="cd g" style="top:233.35px">              ansible.builtin.debug:</div>
<div class="ln" style="top:255.85px">21</div>
<div class="cd g" style="top:255.85px">                var: configuration</div>
<div class="ln" style="top:278.35px">22</div>
<div class="cd g" style="top:278.35px">              vars:</div>
<div class="ln" style="top:300.85px">23</div>
<div class="cd g" style="top:300.85px">                configuration:</div>
<div class="ln" style="top:323.35px">24</div>
<div class="cd g" style="top:323.35px">                  stdout_callback: &quot;{{ lookup('config', 'DEFAULT_STDOUT_CALLBACK', show_origin=true) }}&quot;</div>
<div class="ln" style="top:345.85px">25</div>
<div class="cd g" style="top:345.85px">                  result_format_default: &quot;{{ lookup('config', 'result_format', plugin_type='callback', plugin_name='default', show_origin=true) }}&quot;</div>
<div class="ln" style="top:368.35px">26</div>
<div class="cd g" style="top:368.35px">                  result_format_awx_display: &quot;{{ lookup('config', 'result_format', plugin_type='callback', plugin_name='awx_display', show_origin=true) }}&quot;</div>
<div class="ln" style="top:390.85px">27</div>
<div class="ln" style="top:413.35px">28</div>
<div class="cd g" style="top:413.35px">            - name: Dump YAML file</div>
<div class="ln" style="top:435.85px">29</div>
<div class="cd g" style="top:435.85px">              ansible.builtin.debug:…</div>
<div class="ln" style="top:458.35px">35</div>
<div class="ln" style="top:480.85px">36</div>
<div class="cd" style="top:480.85px">TASK [Referring undefined variable] ********************************************</div>
<div class="ts" style="top:483.25px">14:07:01</div>
<svg style="left:10px;top:486.35px" width="11.5" height="13" viewBox="0 0 448 512"><path fill="#151515" stroke="#151515" stroke-width="42" d="M207.029 381.476L12.686 187.132c-9.373-9.373-9.373-24.569 0-33.941l22.667-22.667c9.357-9.357 24.522-9.375 33.901-.04L224 284.505l154.745-154.021c9.379-9.335 24.544-9.317 33.901.04l22.667 22.667c9.373 9.373 9.373 24.569 0 33.941L240.971 381.476c-9.373 9.372-24.569 9.372-33.942 0z"/></svg>
<div class="ln" style="top:503.35px">37</div>
<div class="cd r" style="top:503.35px">fatal: [localhost]: FAILED! =&gt;</div>
<div id="oscr" class="abs"></div><div id="othumb" class="abs"></div>
<svg style="left:1505.8px;top:7px" width="7.4" height="4.2" viewBox="0 0 9 5"><path d="M0 5 H9 L4.5 0 Z" fill="#505050"/></svg>
<svg style="left:1505.8px;top:497.5px" width="7.4" height="4.2" viewBox="0 0 9 5"><path d="M0 0 H9 L4.5 5 Z" fill="#505050"/></svg>
</div>
</div>

</div>
<div id="winborder"></div>
</body>
</html>
